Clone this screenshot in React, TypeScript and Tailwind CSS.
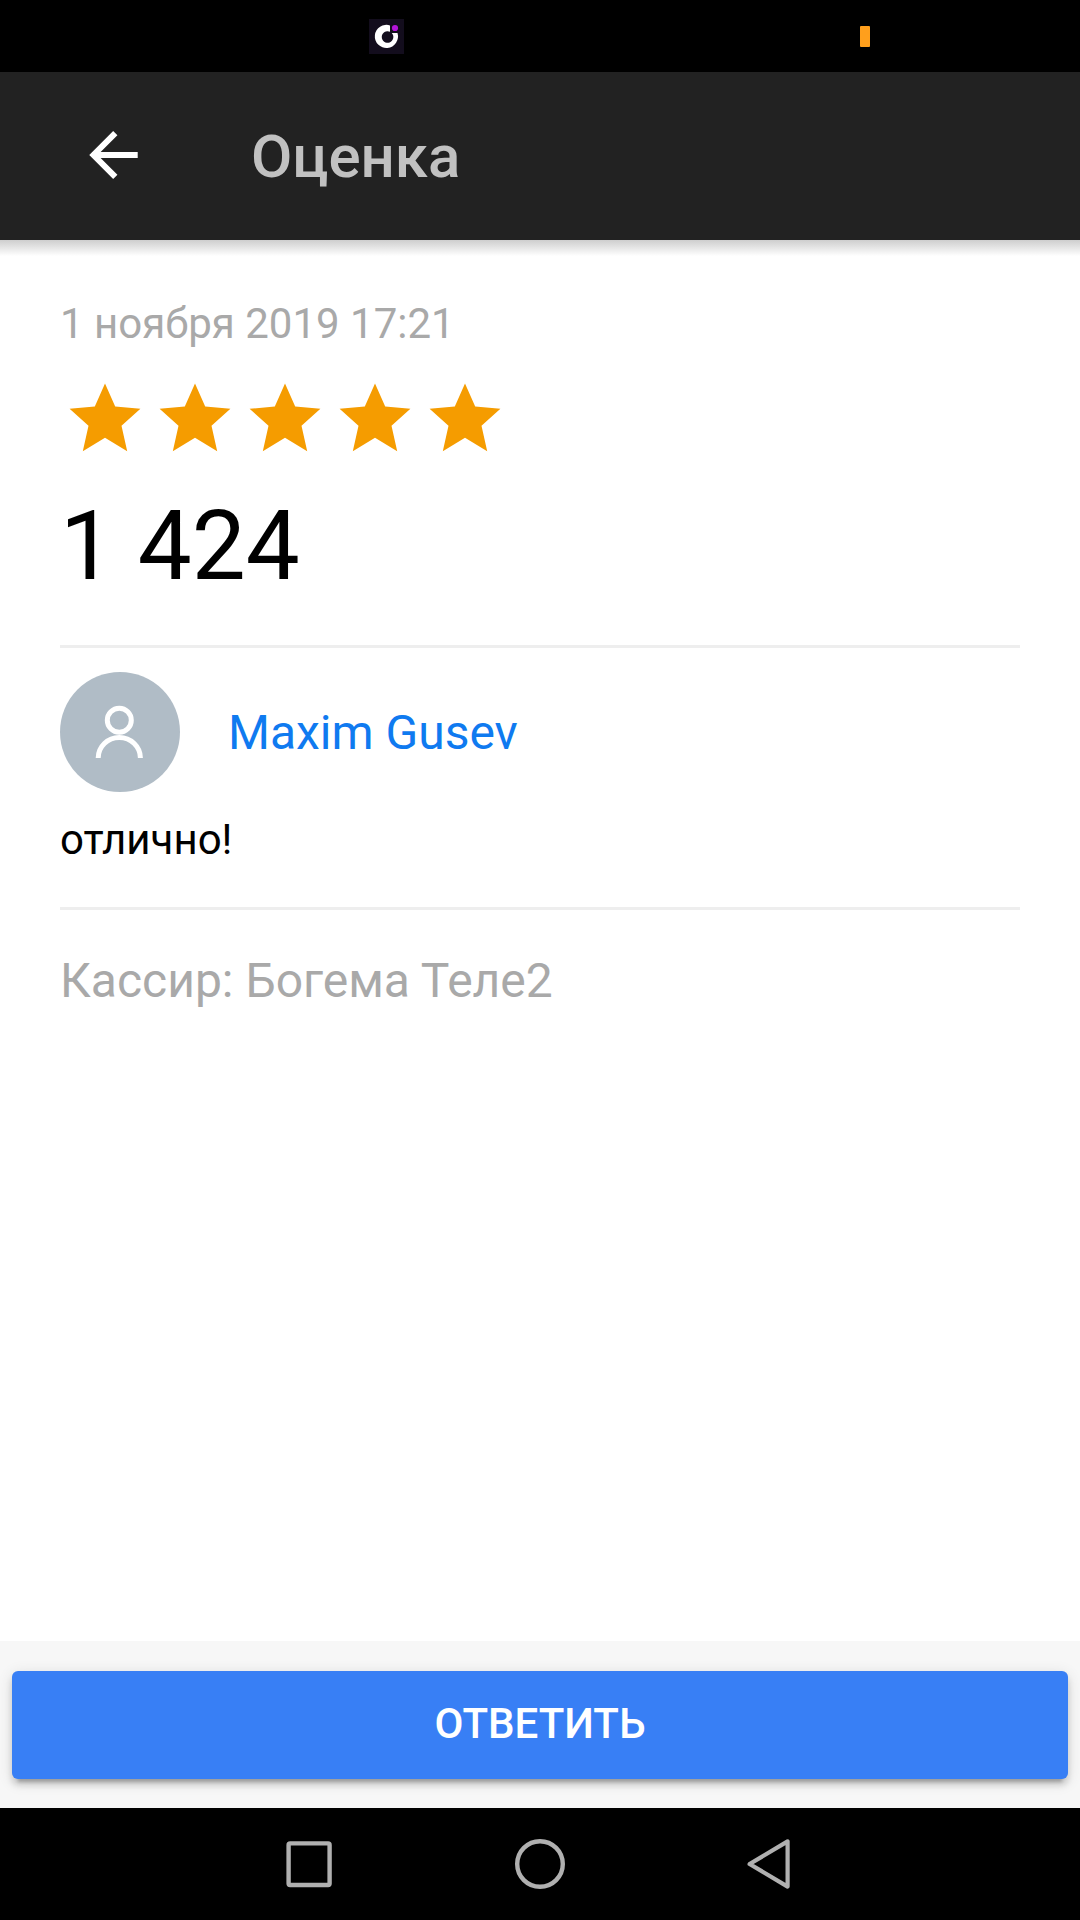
function StatusBar() {
  return (
    <div className="relative h-[72px] shrink-0 bg-black">
      <svg className="absolute left-[369px] top-[19px]" width="35" height="35" viewBox="0 0 35 35">
        <rect width="35" height="35" fill="#130d1d" />
        <path d="M21 6.4V12.7A5.8 5.8 0 1 0 22.8 14H28.5A11.6 11.6 0 1 1 21 6.4Z" fill="#fff" />
        <circle cx="26" cy="9" r="3.1" fill="#b414d8" />
      </svg>
      <div className="absolute left-[860px] top-[26px] h-[21px] w-[10px] rounded-[1px] bg-[#ff9f1c]" />
    </div>
  );
}

function Header() {
  return (
    <header className="relative flex h-[168px] shrink-0 items-center bg-[#222222]">
      <svg className="ml-[84px]" width="60" height="60" viewBox="0 0 60 60" fill="none" stroke="#fff" strokeWidth="6">
        <path d="M31.3 7.2L9.5 29L31.3 50.8M9.5 29H53.7" />
      </svg>
      <h1 className="ml-[107px] pt-[2px] text-[60px] font-medium leading-[72px] text-[#c1c1c1]">Оценка</h1>
      <div className="absolute left-0 top-full h-4 w-full bg-linear-to-b from-[#cecece] to-white" />
    </header>
  );
}

function Star() {
  return (
    <svg width="90" height="90" viewBox="0 0 90 90">
      <path
        d="M45 11.6L55.2 34.5L80.4 36.8L61.5 53.7L67.2 79.2L45 65.8L22.8 79.2L28.5 53.7L9.6 36.8L34.8 34.5Z"
        fill="#f59c00"
      />
    </svg>
  );
}

function Avatar() {
  return (
    <div className="flex size-[120px] items-center justify-center rounded-full bg-[#b0bcc6]">
      <svg width="120" height="120" viewBox="0 0 120 120" fill="none" stroke="#fff" strokeWidth="5">
        <circle cx="59.3" cy="48.3" r="12" />
        <path d="M38.2 86A21.1 20.5 0 0 1 80.4 86" />
      </svg>
    </div>
  );
}

function Divider() {
  return <div className="mt-[43px] h-[3px] bg-[#eeeeee]" />;
}

function NavigationBar() {
  return (
    <nav className="flex h-[112px] shrink-0 items-center bg-black">
      <svg className="ml-[279px]" width="60" height="60" viewBox="0 0 60 60" fill="none" stroke="#b0b0b0" strokeWidth="4.4">
        <rect x="9.6" y="9.4" width="41" height="41.6" rx="1.5" />
      </svg>
      <svg className="ml-[171px]" width="60" height="60" viewBox="0 0 60 60" fill="none" stroke="#b0b0b0" strokeWidth="4.4">
        <circle cx="30" cy="30" r="22.8" />
      </svg>
      <svg
        className="ml-[171px]"
        width="60"
        height="60"
        viewBox="0 0 60 60"
        fill="none"
        stroke="#b0b0b0"
        strokeWidth="4.2"
        strokeLinejoin="round"
      >
        <path d="M46.6 7.4V52.6L8.6 30Z" />
      </svg>
    </nav>
  );
}

export default function App() {
  return (
    <div className="flex h-[1920px] w-[1080px] flex-col overflow-hidden bg-white font-[Roboto,sans-serif]">
      <StatusBar />
      <Header />
      <main className="flex-1 px-[60px] pt-[60px] text-black">
        <p className="text-[42px] leading-[48px] text-[#a9a9a9]">1 ноября 2019 17:21</p>
        <div className="mt-6 flex">
          {[0, 1, 2, 3, 4].map((star) => (
            <Star key={star} />
          ))}
        </div>
        <p className="mt-7 text-[96px] leading-[112px]">1 424</p>
        <Divider />
        <div className="mt-6 flex items-center">
          <Avatar />
          <span className="ml-12 pt-[2px] text-[48px] leading-[56px] text-[#0f7af0]">Maxim Gusev</span>
        </div>
        <p className="mt-6 text-[42px] leading-[48px]">отлично!</p>
        <Divider />
        <p className="mt-[43px] text-[48px] leading-[56px] text-[#a9a9a9]">Кассир: Богема Теле2</p>
      </main>
      <footer className="h-[167px] shrink-0 bg-[#f7f7f7] px-3 pt-[30px]">
        <button className="flex h-[108px] w-full items-center justify-center rounded-[6px] bg-[#387ff5] pb-[2px] text-[42px] font-medium leading-[48px] text-white shadow-[0_6px_6px_rgba(0,0,0,0.14),0_9px_3px_-6px_rgba(0,0,0,0.2),0_3px_15px_rgba(0,0,0,0.12)]">
          ОТВЕТИТЬ
        </button>
      </footer>
      <NavigationBar />
    </div>
  );
}
